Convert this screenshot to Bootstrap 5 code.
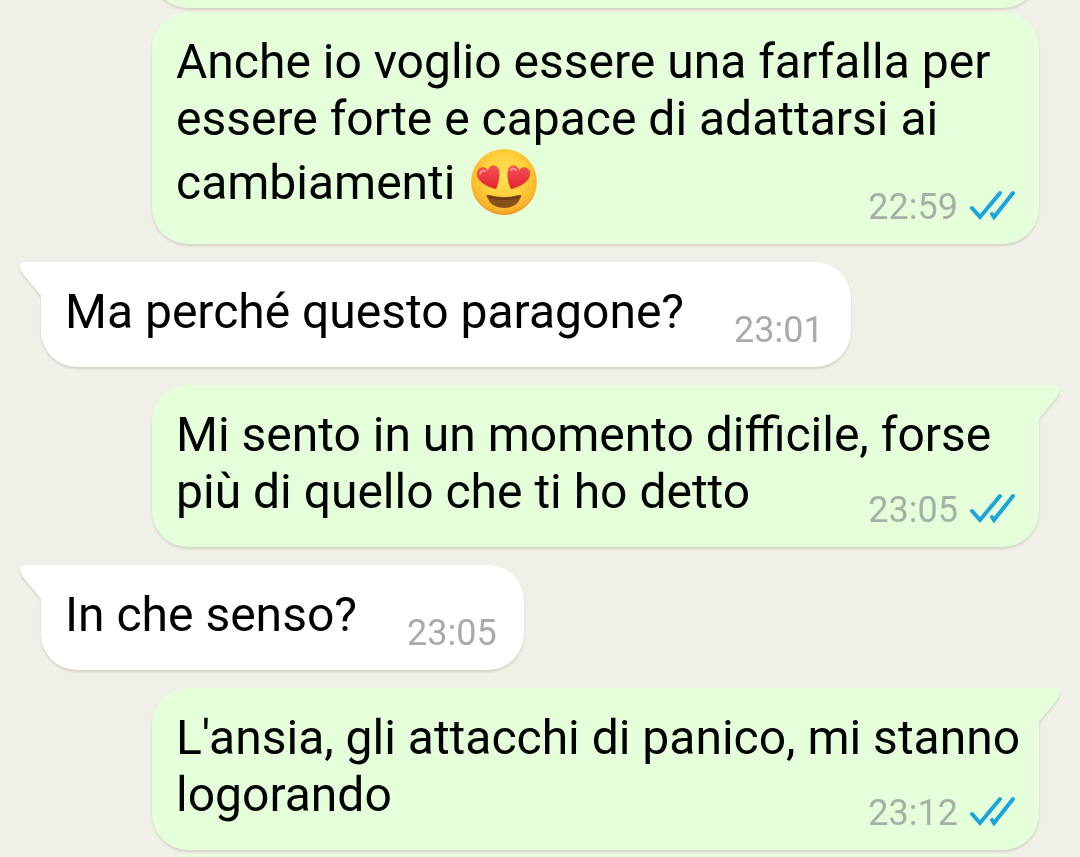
<!DOCTYPE html>
<html lang="it">
<head>
<meta charset="utf-8">
<meta name="viewport" content="width=device-width, initial-scale=1">
<title>Chat</title>
<link rel="stylesheet" href="https://cdn.jsdelivr.net/npm/bootstrap@5.3.0/dist/css/bootstrap.min.css">
<style>
body { background: #f1f0e8; font-family: Roboto, sans-serif; color: #000; }
.chat { margin-top: -72px; padding: 0 41px; }
.bubble { border-radius: 36px; padding: 21px 18px 27px 24px; filter: drop-shadow(0 2px 1px rgba(60, 50, 40, .16)); }
.bubble p { font-size: 48px; line-height: 57px; }
.outgoing { background: #e4ffda; margin-left: 111px; }
.message, .outgoing .meta { grid-area: 1 / 1; }
.outgoing .meta { margin-right: 6px; }
.incoming { background: #fff; gap: 50px; padding-right: 27px; }
.same-sender { margin-top: 4px; }
.other-sender { margin-top: 18px; }
.cut { height: 80px; }
.incoming.tailed { border-top-left-radius: 0; }
.outgoing.tailed { border-top-right-radius: 0; }
.tail { top: 0; width: 23px; height: 36px; }
.incoming .tail { left: -21px; fill: #fff; }
.outgoing .tail { right: -21px; fill: #e4ffda; }
.meta { font-size: 36px; line-height: 42px; color: #a6b1a6; margin-bottom: -11px; }
.incoming .meta { color: #a8aaab; }
.ticks { width: 46px; height: 32px; margin: 0 0 3px 3px; fill: none; stroke: #1ba5dc; stroke-width: 4; stroke-linecap: round; stroke-linejoin: miter; }
.emoji { width: 70px; height: 70px; vertical-align: -18px; }
</style>
</head>
<body class="overflow-hidden vh-100">
<svg class="d-none" aria-hidden="true">
  <symbol id="read" viewBox="0 0 46 32"><path d="M3 18 11 27 31 3M23 24 25 27 44 3"/></symbol>
  <symbol id="tail-left" viewBox="0 0 23 36"><path d="M23 0H5Q1 0 0 4Q0 8 3 12L22 35H23Z"/></symbol>
  <symbol id="tail-right" viewBox="0 0 23 36"><path d="M0 0H18Q22 0 23 4Q23 8 20 12L1 35H0Z"/></symbol>
</svg>
<main class="chat d-flex flex-column">
  <article class="bubble outgoing cut"></article>

  <article class="bubble outgoing same-sender d-grid">
    <p class="message m-0">Anche io voglio essere una farfalla per essere forte e capace di adattarsi ai cambiamenti <svg class="emoji" viewBox="0 0 70 70" role="img" aria-label="😍">
      <defs>
        <radialGradient id="face" cx=".5" cy=".4" r=".62"><stop offset="0" stop-color="#ffe256"/><stop offset=".55" stop-color="#ffcf3b"/><stop offset=".85" stop-color="#f9b22b"/><stop offset="1" stop-color="#e8912a"/></radialGradient>
        <linearGradient id="heart" x2="0" y2="1"><stop offset="0" stop-color="#f8505a"/><stop offset="1" stop-color="#e2232c"/></linearGradient>
      </defs>
      <circle cx="37" cy="35" r="33" fill="url(#face)"/>
      <path d="M29 42C20 40 10 34 10 27C10 20 18 18 21 24C22 17 31 17 32 24C33 30 31 38 29 42Z" fill="url(#heart)" stroke="#d85a28" stroke-opacity=".5"/>
      <path d="M44 42C42 38 40 30 41 24C42 17 51 17 52 24C55 18 63 20 63 27C63 34 53 40 44 42Z" fill="url(#heart)" stroke="#d85a28" stroke-opacity=".5"/>
      <path d="M13 27Q14 23 18 24M44 23Q46 20 49 23" fill="none" stroke="#ff929a" stroke-width="2" stroke-linecap="round"/>
      <path d="M20 50Q18 47 22 48Q37 52 52 48Q55 47 54 50Q50 61 37 61Q24 61 20 50Z" fill="#85501a"/>
      <path d="M22 50Q37 54 52 50" fill="none" stroke="#6b3b12" stroke-width="2"/>
    </svg></p>
    <div class="meta d-flex align-items-center align-self-end ms-auto"><time class="me-2">22:59</time><svg class="ticks" role="img" aria-label="Letto"><use href="#read"/></svg></div>
  </article>

  <article class="bubble incoming tailed other-sender d-flex align-self-start position-relative">
    <svg class="tail position-absolute" aria-hidden="true"><use href="#tail-left"/></svg>
    <p class="m-0">Ma perché questo paragone?</p>
    <time class="meta align-self-end">23:01</time>
  </article>

  <article class="bubble outgoing tailed other-sender d-grid position-relative">
    <svg class="tail position-absolute" aria-hidden="true"><use href="#tail-right"/></svg>
    <p class="message m-0">Mi sento in un momento difficile, forse più di quello che ti ho detto</p>
    <div class="meta d-flex align-items-center align-self-end ms-auto"><time class="me-2">23:05</time><svg class="ticks" role="img" aria-label="Letto"><use href="#read"/></svg></div>
  </article>

  <article class="bubble incoming tailed other-sender d-flex align-self-start position-relative">
    <svg class="tail position-absolute" aria-hidden="true"><use href="#tail-left"/></svg>
    <p class="m-0">In che senso?</p>
    <time class="meta align-self-end">23:05</time>
  </article>

  <article class="bubble outgoing tailed other-sender d-grid position-relative">
    <svg class="tail position-absolute" aria-hidden="true"><use href="#tail-right"/></svg>
    <p class="message m-0">L'ansia, gli attacchi di panico, mi stanno logorando</p>
    <div class="meta d-flex align-items-center align-self-end ms-auto"><time class="me-2">23:12</time><svg class="ticks" role="img" aria-label="Letto"><use href="#read"/></svg></div>
  </article>

  <article class="bubble outgoing same-sender cut"></article>
</main>
<script src="https://cdn.jsdelivr.net/npm/bootstrap@5.3.0/dist/js/bootstrap.bundle.min.js"></script>
</body>
</html>
